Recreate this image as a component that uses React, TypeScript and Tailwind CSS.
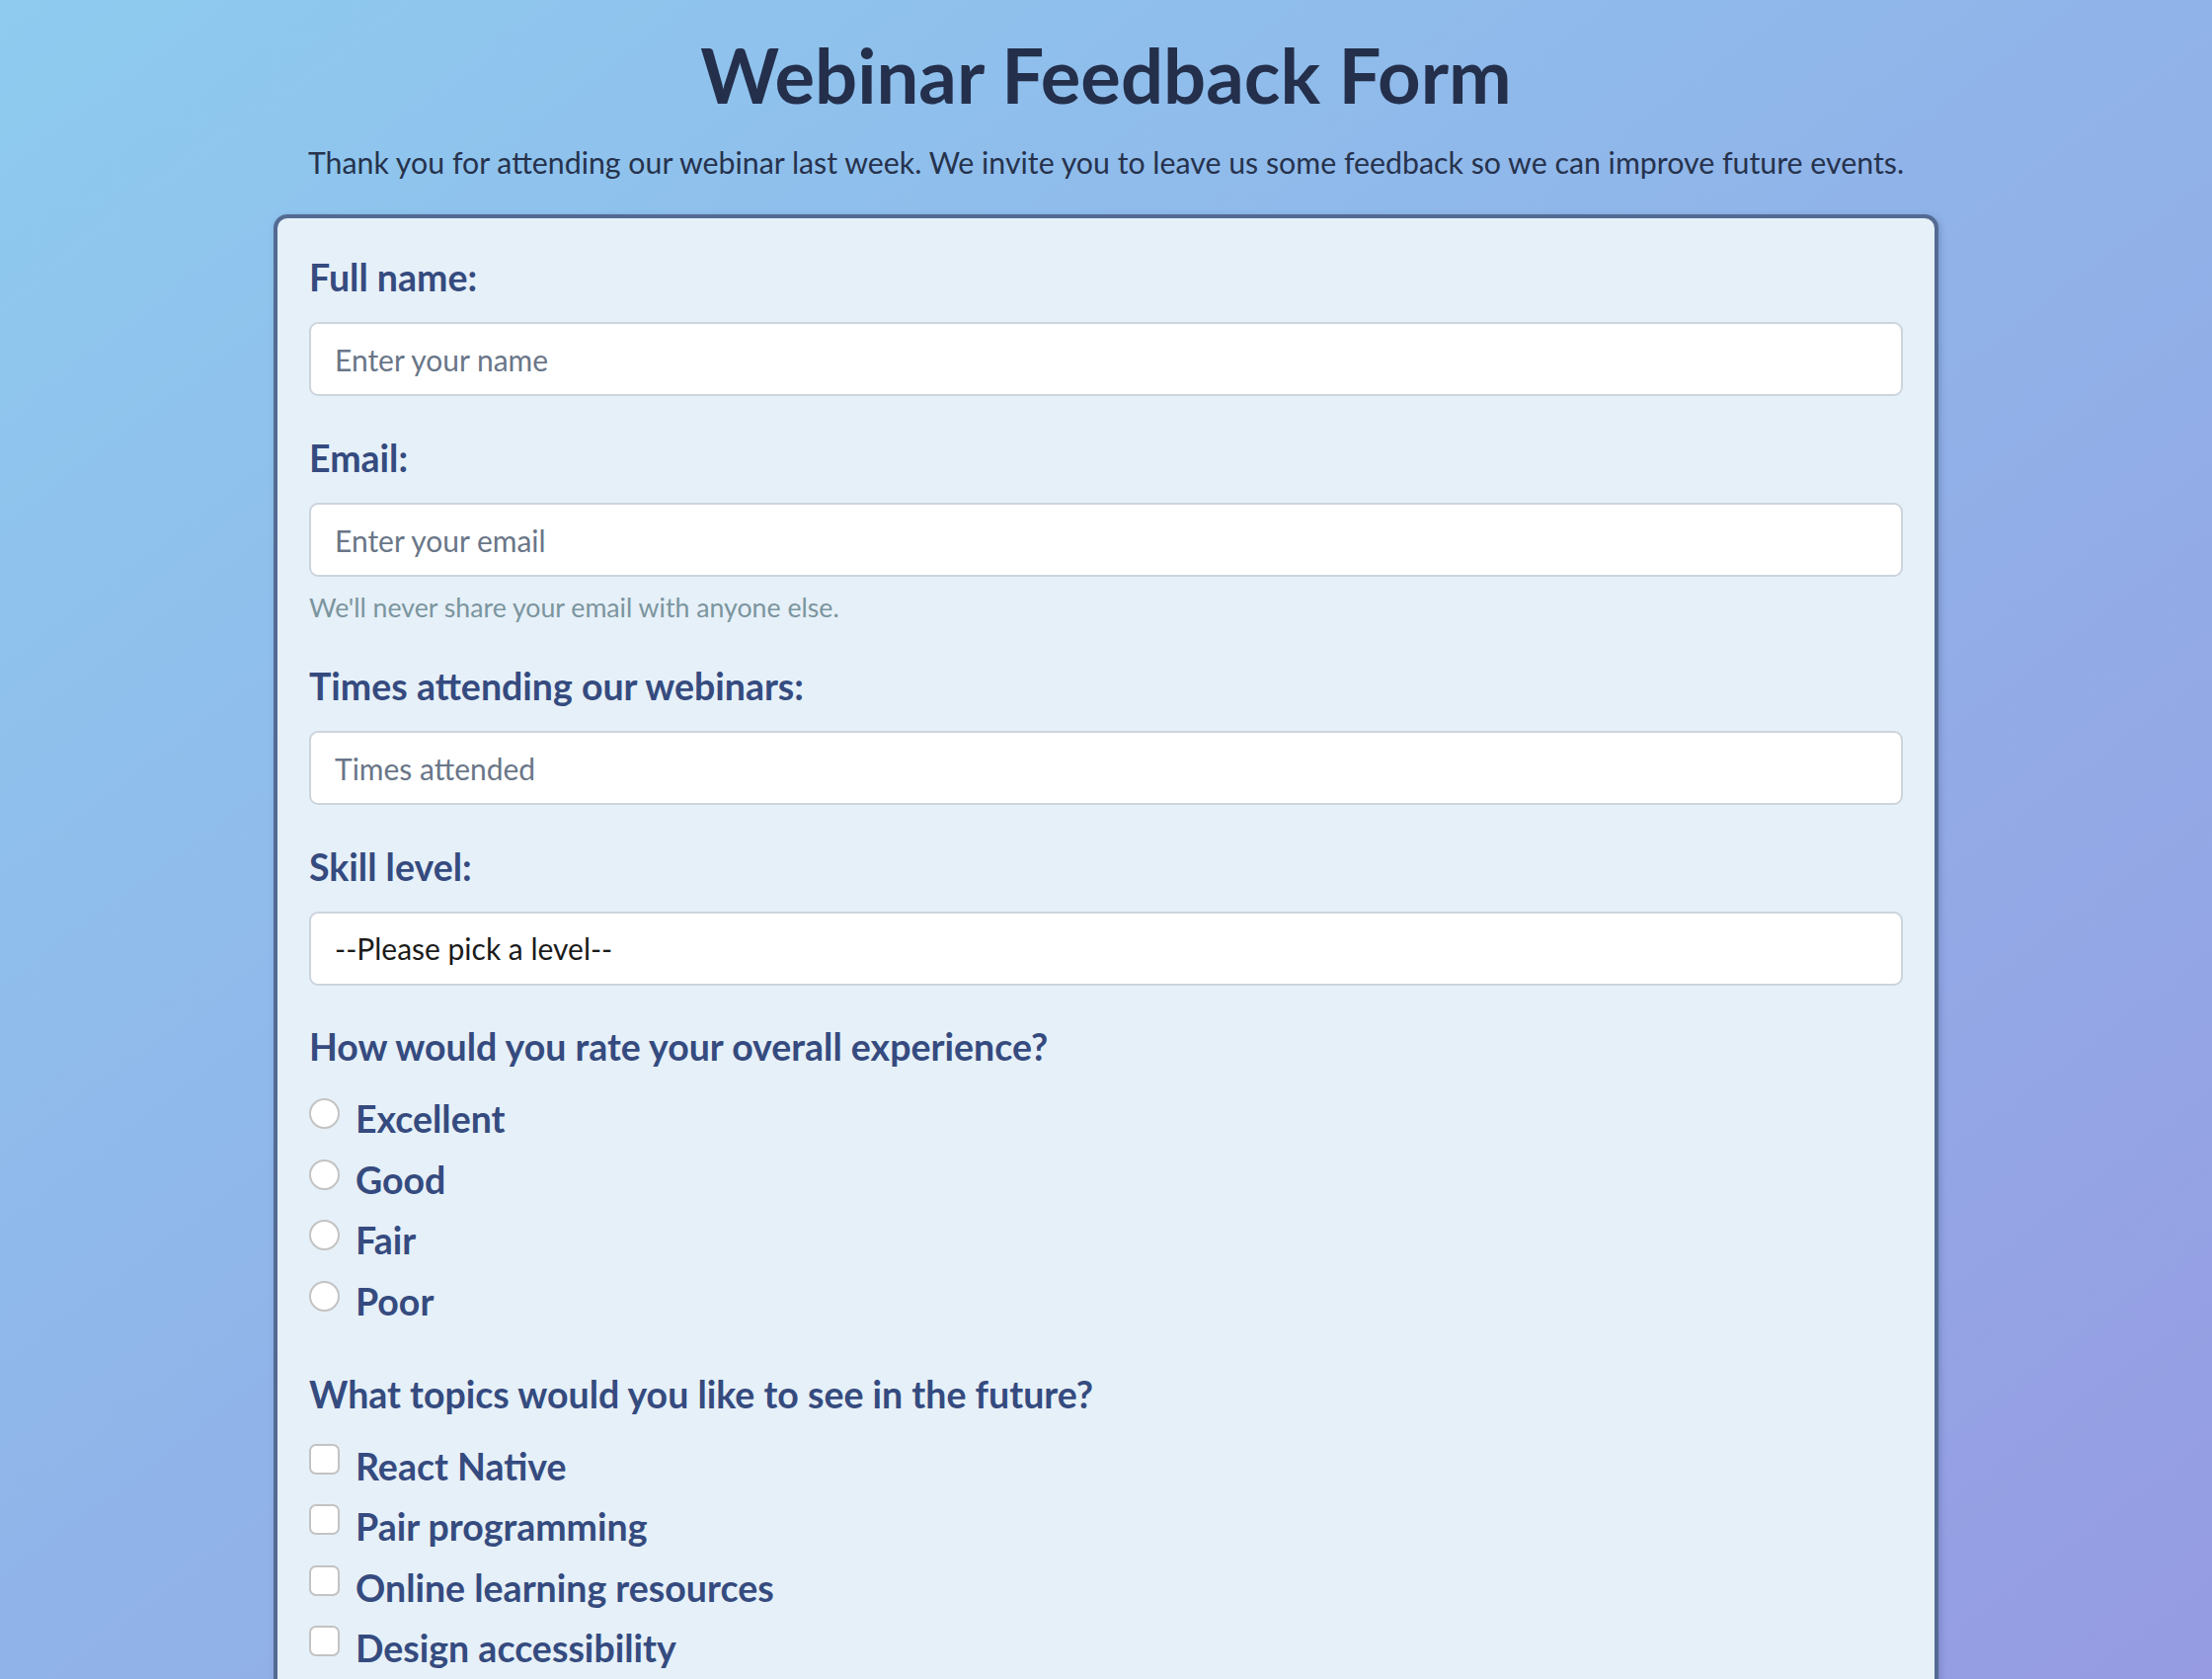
import React from "react";

const font = { fontFamily: "Lato, 'Noto Sans', sans-serif" };

const ratings = ["Excellent", "Good", "Fair", "Poor"];
const topics = ["React Native", "Pair programming", "Online learning resources", "Design accessibility"];

function Label({ children, htmlFor }: { children: React.ReactNode; htmlFor?: string }) {
  return (
    <label htmlFor={htmlFor} className="block text-[37.5px] leading-[46px] font-bold text-[#354b7f]">
      {children}
    </label>
  );
}

const inputClass =
  "mt-[22px] block w-full h-[75px] bg-white border-2 border-[#ccd4dc] rounded-[9px] px-[24px] text-[30px] text-[#1b1b1b] placeholder:text-[#6a7688] outline-none";

export default function App() {
  return (
    <div
      className="min-h-screen bg-fixed bg-linear-to-br from-[#8ecbef] via-[#90b3e9] to-[#969be2] pt-[32px] pb-[80px]"
      style={font}
    >
      <h1 className="text-center text-[76px] leading-[88px] font-bold text-[#242f4b]">Webinar Feedback Form</h1>
      <p className="mt-[26px] text-center text-[30.3px] leading-[36px] text-[#26324c]">
        Thank you for attending our webinar last week. We invite you to leave us some feedback so we can improve future
        events.
      </p>

      <form className="mx-auto mt-[35px] w-[1686px] bg-[#e6f0f8] border-4 border-[#536a92] rounded-[14px] px-[32px] pt-[37px] pb-[48px] shadow-[2px_2px_6px_rgba(40,60,110,0.25)]">
        <Label htmlFor="name">Full name:</Label>
        <input id="name" type="text" placeholder="Enter your name" className={inputClass} />

        <div className="mt-[40px]">
          <Label htmlFor="email">Email:</Label>
          <input id="email" type="email" placeholder="Enter your email" className={inputClass} />
          <p className="mt-[15px] text-[26.7px] leading-[32px] text-[#7b959e]">We'll never share your email with anyone else.</p>
        </div>

        <div className="mt-[41px]">
          <Label htmlFor="times">Times attending our webinars:</Label>
          <input id="times" type="number" placeholder="Times attended" className={inputClass} />
        </div>

        <div className="mt-[40px]">
          <Label htmlFor="skill">Skill level:</Label>
          <select id="skill" defaultValue="" className={`${inputClass} appearance-none`}>
            <option value="">--Please pick a level--</option>
            <option value="beginner">Beginner</option>
            <option value="intermediate">Intermediate</option>
            <option value="advanced">Advanced</option>
          </select>
        </div>

        <div className="mt-[39px]">
          <Label>How would you rate your overall experience?</Label>
          <div className="mt-[28px] flex flex-col gap-[17.5px]">
            {ratings.map((r) => (
              <label key={r} className="flex items-start gap-[16px] h-[44px] text-[37.5px] leading-[44px] font-bold text-[#354b7f]">
                <input
                  type="radio"
                  name="rating"
                  value={r}
                  className="appearance-none mt-[1px] w-[31px] h-[31px] shrink-0 rounded-full bg-white border-2 border-[#c3c3c3]"
                />
                {r}
              </label>
            ))}
          </div>
        </div>

        <div className="mt-[49px]">
          <Label>What topics would you like to see in the future?</Label>
          <div className="mt-[28px] flex flex-col gap-[17.5px]">
            {topics.map((t) => (
              <label key={t} className="flex items-start gap-[16px] h-[44px] text-[37.5px] leading-[44px] font-bold text-[#354b7f]">
                <input
                  type="checkbox"
                  value={t}
                  className="appearance-none -mt-px w-[31px] h-[31px] shrink-0 rounded-[7px] bg-white border-2 border-[#c3c3c3]"
                />
                {t}
              </label>
            ))}
          </div>
        </div>

        <div className="mt-[50px]">
          <Label htmlFor="comments">Any other comments?</Label>
          <textarea
            id="comments"
            rows={4}
            placeholder="Enter your comments here..."
            className="mt-[22px] block w-full bg-white border-2 border-[#ccd4dc] rounded-[9px] px-[24px] py-[16px] text-[30px] placeholder:text-[#6a7688] outline-none"
          />
        </div>

        <button type="submit" className="mt-[40px] w-full h-[75px] rounded-[9px] bg-[#354b7f] text-white text-[32px] font-bold">
          Submit
        </button>
      </form>
    </div>
  );
}
